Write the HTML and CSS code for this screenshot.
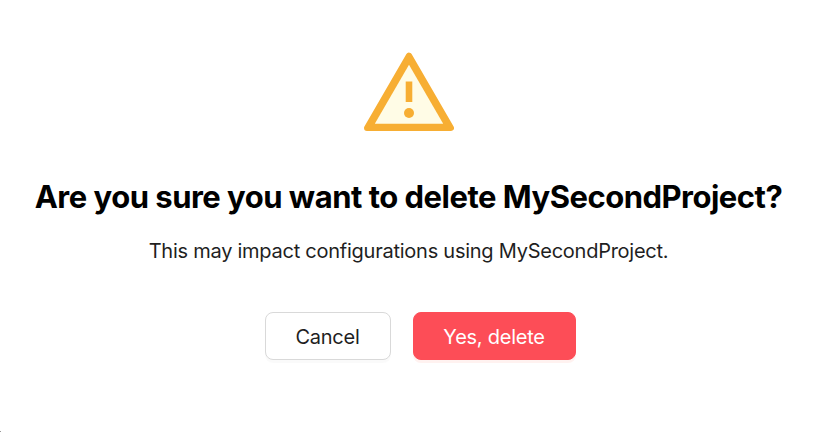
FILE: index.html
```html
<!DOCTYPE html>
<html lang="en">
<head>
<meta charset="utf-8">
<title>Delete project</title>
<link rel="stylesheet" href="styles.css">
</head>
<body>
<main class="dialog">
  <svg class="icon" viewBox="0 0 90 80" aria-hidden="true">
    <path d="M45 3.6 87 76H3Z" fill="#f7ae33" stroke="#f7ae33" stroke-width="6" stroke-linejoin="round"/>
    <path d="M45 12.7 79.2 71.8H10.8Z" fill="#fffce6"/>
    <path d="M41.7 29.5h6.6v20.5h-6.6z" fill="#f7ae33"/>
    <circle cx="45" cy="61" r="5" fill="#f7ae33"/>
  </svg>
  <h1 class="title">Are you sure you want to delete MySecondProject?</h1>
  <p class="message">This may impact configurations using MySecondProject.</p>
  <div class="actions">
    <button class="button">Cancel</button>
    <button class="button button-danger">Yes, delete</button>
  </div>
  <span class="corner"></span>
</main>
</body>
</html>
```
FILE: styles.css
```css
* { box-sizing: border-box; }
body { margin: 0; background: #fff; font-family: Inter, sans-serif; }
.dialog { position: relative; height: 432px; padding-top: 52px; display: flex; flex-direction: column; align-items: center; white-space: nowrap; }
.icon { width: 90px; height: 80px; }
.title { margin: 45px 0 0; font-size: 31px; line-height: 40px; font-weight: 700; letter-spacing: -0.5px; color: #000; }
.message { margin: 19px 0 0; font-size: 20px; line-height: 30px; letter-spacing: -0.25px; color: #1f1f1f; }
.actions { display: flex; gap: 22px; margin: 46px 0 0 23px; }
.button { width: 126px; height: 48px; padding: 2px 0 0; border: 1px solid #d9d9d9; border-radius: 8px; background: #fff; box-shadow: 0 3px 0 rgba(0,0,0,.02); font: 400 20px/30px Inter, sans-serif; letter-spacing: -0.25px; color: #1f1f1f; }
.button-danger { width: 163px; border-color: #fd4d57; background: #fd4d57; box-shadow: 0 3px 0 #fff2f0; color: #fff; }
.corner { position: absolute; left: 0; bottom: 0; width: 1px; height: 1px; background: #999; }
```
